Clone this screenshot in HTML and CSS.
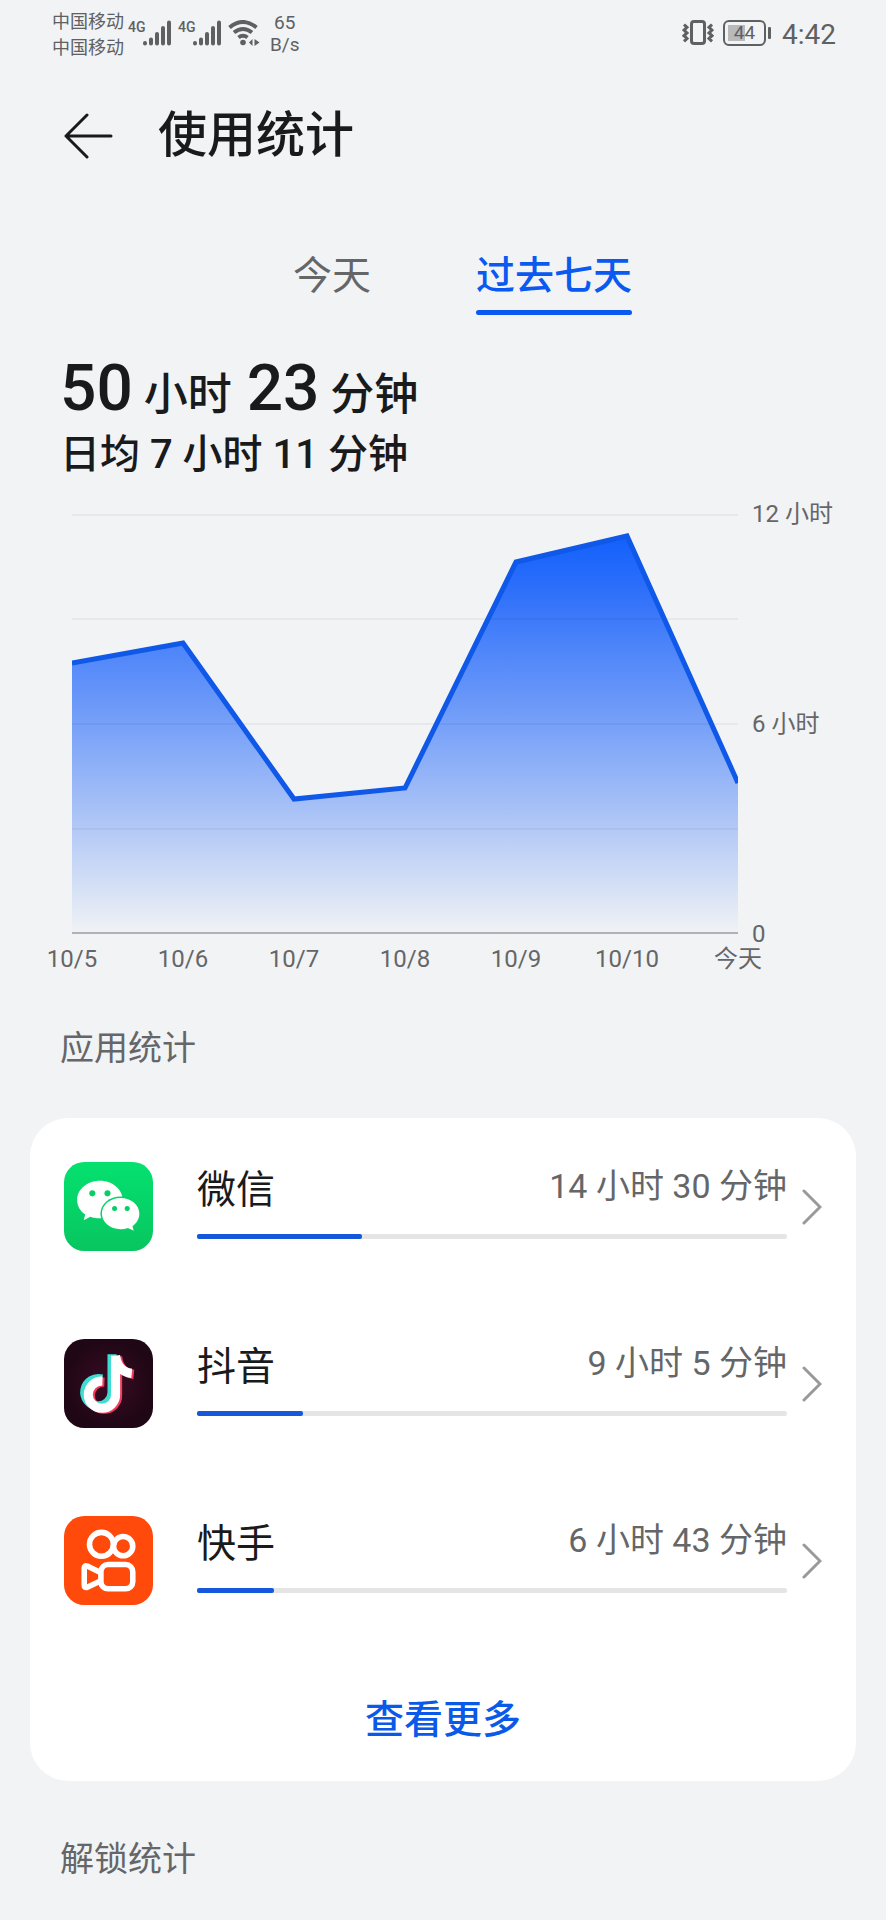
FILE: index.html
```html
<!DOCTYPE html>
<html lang="zh-CN">
<head>
<meta charset="utf-8">
<meta name="viewport" content="width=device-width, initial-scale=1">
<title>使用统计</title>
<link rel="stylesheet" href="styles.css">
</head>
<body>
<div class="status-bar">
  <div class="status-left">
    <div class="carriers"><span>中国移动</span><span>中国移动</span></div>
    <div class="signal">
      <span class="network">4G</span>
      <svg class="bars" viewBox="0 0 28 26" aria-hidden="true"><path d="M2 23v.5M8 19.500v4M14 14v9.500M20 8v15.500M26 2.500v21"/></svg>
    </div>
    <div class="signal">
      <span class="network">4G</span>
      <svg class="bars" viewBox="0 0 28 26" aria-hidden="true"><path d="M2 23v.5M8 19.500v4M14 14v9.500M20 8v15.500M26 2.500v21"/></svg>
    </div>
    <svg class="wifi" viewBox="0 0 32 26" aria-hidden="true">
      <path class="wifi-arc" d="M1.500 7.500Q15 -3.500 28.500 7.500M6 12.500q9-7 18 0M10.500 17.500q4.500-3.500 9 0"/>
      <circle cx="15" cy="22.500" r="2.800"/>
      <path d="M24.500 19v7L21 22.500zM26.500 19v7l5-3.500z"/>
    </svg>
    <div class="speed"><span>65</span><span>B/s</span></div>
  </div>
  <div class="status-right">
    <svg class="vibrate" viewBox="0 0 32 28" aria-hidden="true">
      <rect x="9.500" y="2.500" width="13" height="22" rx="2.500"/>
      <path d="M2 5.500l3 2.800-3 2.800 3 2.800-3 2.800 3 2.800-3 2.800M30 5.500l-3 2.800 3 2.800-3 2.800 3 2.800-3 2.800 3 2.800"/>
    </svg>
    <div class="battery"><span class="battery-level">44</span></div>
    <span class="clock">4:42</span>
  </div>
</div>

<header class="header">
  <button class="back" type="button" aria-label="返回">
    <svg viewBox="0 0 50 46" aria-hidden="true"><path d="M23 2L2 23l21 21M3 23h44"/></svg>
  </button>
  <h1 class="title">使用统计</h1>
</header>

<nav class="tabs">
  <button class="tab" type="button">今天</button>
  <button class="tab tab-active" type="button" aria-current="true">过去七天</button>
</nav>

<main>
  <section class="summary">
    <p class="total"><span class="number">50</span> 小时 <span class="number">23</span> 分钟</p>
    <p class="average">日均 7 小时 11 分钟</p>
  </section>

  <section class="chart">
    <svg class="plot" viewBox="0 0 666 420" preserveAspectRatio="none" role="img" aria-label="过去七天使用时长">
      <defs>
        <linearGradient id="fill" gradientUnits="userSpaceOnUse" x1="0" y1="21" x2="0" y2="420">
          <stop offset="0" stop-color="#1260fb"/>
          <stop offset=".12" stop-color="#2a6dfb"/>
          <stop offset=".5" stop-color="#7ca4f8"/>
          <stop offset=".75" stop-color="#b6cbf6"/>
          <stop offset="1" stop-color="#f1f3f5"/>
        </linearGradient>
      </defs>
      <path fill="url(#fill)" d="M0 149L111 129L222 285L333 274L444 48L555 22L666 269V420H0z"/>
      <path class="grid-line" d="M0 1H666M0 105H666M0 210H666M0 315H666"/>
      <path class="base-line" d="M0 419H666"/>
      <path class="trend" d="M0 149L111 129L222 285L333 274L444 48L555 22L666 269"/>
    </svg>
    <div class="y-axis"><span>12 小时</span><span>6 小时</span><span>0</span></div>
    <div class="x-axis"><span>10/5</span><span>10/6</span><span>10/7</span><span>10/8</span><span>10/9</span><span>10/10</span><span>今天</span></div>
  </section>

  <h2 class="section-title">应用统计</h2>
  <section class="card">
    <a class="app" href="#wechat">
      <svg class="app-icon" viewBox="0 0 88 88" aria-hidden="true">
        <defs><linearGradient id="wechat-bg" x1="0" y1="0" x2="0" y2="1"><stop offset="0" stop-color="#04e16f"/><stop offset="1" stop-color="#08c560"/></linearGradient></defs>
        <rect width="88" height="88" rx="20" fill="url(#wechat-bg)"/>
        <path fill="#fff" d="M35.500 18.500C23 18.500 13 27 13 37.500c0 6 3 11 8 14.500l-1.500 5.500 6.500-3.300c3 1 6 1.500 9.500 1.500C48 55.700 58 48 58 37.500S48 18.500 35.500 18.500z"/>
        <ellipse cx="56" cy="51" rx="20" ry="17" fill="#07d267"/>
        <path fill="#fff" d="M56 35.500c-10.500 0-18.500 7-18.500 15.500S45.500 66.500 56 66.500c2.500 0 5-.4 7.200-1.200L69 68l-1.300-4.500C72 60.500 74.500 56 74.500 51c0-8.500-8-15.500-18.500-15.500z"/>
        <g fill="#07cf66"><circle cx="28" cy="31" r="3"/><circle cx="43" cy="31" r="3"/><circle cx="50" cy="46" r="2.500"/><circle cx="62.500" cy="46" r="2.500"/></g>
      </svg>
      <div class="app-body">
        <div class="app-line"><span class="app-name">微信</span><span class="app-time">14 小时 30 分钟</span></div>
        <div class="track"><div class="track-fill" style="width:28%"></div></div>
      </div>
      <svg class="chevron" viewBox="0 0 20 36" aria-hidden="true"><path d="M2 2l16 16L2 34"/></svg>
    </a>
    <a class="app" href="#douyin">
      <svg class="app-icon" viewBox="0 0 88 88" aria-hidden="true">
        <defs><radialGradient id="douyin-bg"><stop offset="0" stop-color="#3b0b24"/><stop offset="1" stop-color="#1f0715"/></radialGradient></defs>
        <rect width="88" height="88" rx="20" fill="url(#douyin-bg)"/>
        <g fill="none" stroke-width="9">
          <path stroke="#f23c5f" d="M53 17.500V55.500A13.500 13.500 0 1 1 40 42.500M53 17.500q2 16 16 17.500"/>
          <path stroke="#3fdcd4" d="M47.500 15v38A13.500 13.500 0 1 1 37.500 39.500"/>
          <path stroke="#fff" d="M51 16.500V54.500A13.500 13.500 0 1 1 38 41.500M51 16.500q2 16 16 17.500"/>
        </g>
      </svg>
      <div class="app-body">
        <div class="app-line"><span class="app-name">抖音</span><span class="app-time">9 小时 5 分钟</span></div>
        <div class="track"><div class="track-fill" style="width:18%"></div></div>
      </div>
      <svg class="chevron" viewBox="0 0 20 36" aria-hidden="true"><path d="M2 2l16 16L2 34"/></svg>
    </a>
    <a class="app" href="#kuaishou">
      <svg class="app-icon" viewBox="0 0 88 88" aria-hidden="true">
        <rect width="88" height="88" rx="20" fill="#ff4a0b"/>
        <g fill="none" stroke="#fff" stroke-width="5.500" stroke-linejoin="round">
          <circle cx="37" cy="28" r="11.800"/>
          <circle cx="58.500" cy="29.800" r="9.500"/>
          <rect x="36.500" y="48" width="31.500" height="24" rx="7"/>
          <path d="M36.500 56L23 49.500q-3-1-3 2v17q0 3 3 2L36.500 64"/>
        </g>
      </svg>
      <div class="app-body">
        <div class="app-line"><span class="app-name">快手</span><span class="app-time">6 小时 43 分钟</span></div>
        <div class="track"><div class="track-fill" style="width:13%"></div></div>
      </div>
      <svg class="chevron" viewBox="0 0 20 36" aria-hidden="true"><path d="M2 2l16 16L2 34"/></svg>
    </a>
    <button class="more" type="button">查看更多</button>
  </section>

  <h2 class="section-title">解锁统计</h2>
</main>
</body>
</html>
```
FILE: styles.css
```css
* {
  box-sizing: border-box;
}

body {
  margin: 0;
  background: #f1f3f5;
  color: #191a1c;
  font-family: Roboto, "Noto Sans CJK SC", sans-serif;
}

h1, h2, p {
  margin: 0;
}

button {
  padding: 0;
  border: 0;
  background: none;
  font-family: inherit;
  cursor: pointer;
}

svg {
  display: block;
  flex: none;
}

/* Status bar */
.status-bar {
  display: flex;
  justify-content: space-between;
  height: 68px;
  padding: 9px 50px 0 52px;
  color: #5f6062;
}

.status-left,
.status-right {
  display: flex;
  align-items: flex-start;
}

.carriers {
  display: flex;
  flex-direction: column;
  font-size: 18px;
  line-height: 26px;
}

.signal {
  display: flex;
  align-items: flex-start;
  width: 46px;
  margin: 11px 0 0 4px;
}

.network {
  width: 15px;
  font-size: 14px;
  font-weight: 500;
  line-height: 14px;
}

.bars {
  width: 28px;
  height: 26px;
  fill: none;
  stroke: #5f6062;
  stroke-width: 4;
  stroke-linecap: round;
}

.wifi {
  width: 32px;
  height: 26px;
  margin: 11px 0 0 4px;
  fill: #5f6062;
}

.wifi-arc {
  fill: none;
  stroke: #5f6062;
  stroke-width: 4;
}

.speed {
  display: flex;
  flex-direction: column;
  margin: 3px 0 0 10px;
  font-size: 19px;
  line-height: 22px;
  text-align: center;
}

.vibrate {
  width: 32px;
  height: 28px;
  margin: 10px 9px 0 0;
  fill: none;
  stroke: #5f6062;
  stroke-width: 3;
}

.battery {
  position: relative;
  width: 43px;
  height: 26px;
  margin: 11px 16px 0 0;
  padding: 3px;
  border: 2px solid #5f6062;
  border-radius: 6px;
}

.battery::after {
  content: "";
  position: absolute;
  top: 5px;
  right: -7px;
  width: 3px;
  height: 12px;
  border-radius: 1px;
  background: #5f6062;
}

.battery-level {
  display: block;
  background: linear-gradient(to right, #b8b9bb 50%, transparent 50%);
  font-size: 19px;
  line-height: 16px;
  text-align: center;
}

.clock {
  margin-top: 10px;
  font-size: 28px;
  line-height: 32px;
}

/* Title row */
.header {
  display: flex;
  align-items: center;
  gap: 44px;
  height: 136px;
  padding: 0 64px;
}

.back svg {
  width: 50px;
  height: 46px;
  fill: none;
  stroke: #191a1c;
  stroke-width: 3;
  stroke-linecap: round;
  stroke-linejoin: round;
}

.title {
  font-size: 49px;
  font-weight: 500;
  line-height: 64px;
}

/* Tabs */
.tabs {
  display: grid;
  grid-template-columns: 222px 222px;
  justify-content: center;
  justify-items: center;
  margin-top: 40px;
}

.tab {
  padding-bottom: 7px;
  color: #656668;
  font-size: 39px;
  line-height: 64px;
}

.tab-active {
  position: relative;
  color: #0a59f0;
  font-weight: 500;
}

.tab-active::after {
  content: "";
  position: absolute;
  right: 0;
  bottom: 0;
  left: 0;
  height: 5px;
  border-radius: 3px;
  background: #0a59f0;
}

/* Totals */
.summary {
  padding: 38px 60px 0;
  font-weight: 500;
}

.total {
  font-size: 44px;
  line-height: 72px;
}

.number {
  font-size: 64px;
}

.number + .number {
  margin-left: 4px;
}

.average {
  font-size: 40px;
  line-height: 48px;
}

/* Chart */
.chart {
  display: grid;
  grid-template-columns: 1fr 82px;
  column-gap: 14px;
  padding: 35px 52px 0 72px;
  color: #656668;
  font-size: 24px;
  line-height: 24px;
}

.plot {
  width: 100%;
  height: 420px;
}

.grid-line,
.base-line,
.trend {
  fill: none;
  vector-effect: non-scaling-stroke;
}

.grid-line {
  stroke: rgba(0, 0, 0, .09);
  stroke-width: 1;
}

.base-line {
  stroke: #b0b2b6;
  stroke-width: 2;
}

.trend {
  stroke: #0f58e8;
  stroke-width: 5;
}

.y-axis {
  display: flex;
  flex-direction: column;
  justify-content: space-between;
  margin: -12px 0;
  white-space: nowrap;
}

.x-axis {
  display: flex;
  justify-content: space-between;
  margin-top: 13px;
}

.x-axis span {
  display: flex;
  justify-content: center;
  width: 0;
  white-space: nowrap;
}

/* App list */
.section-title {
  padding: 0 60px;
  color: #656668;
  font-size: 34px;
  font-weight: 400;
  line-height: 48px;
}

.chart + .section-title {
  margin-top: 53px;
}

.card {
  margin: 46px 30px 54px;
  padding: 44px 0 20px;
  border-radius: 38px;
  background: #fff;
}

.app {
  display: flex;
  align-items: center;
  height: 89px;
  margin-bottom: 88px;
  padding: 0 34px;
  color: inherit;
  text-decoration: none;
}

.app-icon {
  width: 89px;
  height: 89px;
}

.app-body {
  flex: 1;
  margin: 0 15px 0 44px;
  padding-bottom: 12px;
}

.app-line {
  display: flex;
  align-items: flex-start;
  justify-content: space-between;
}

.app-name {
  font-size: 39px;
  line-height: 56px;
}

.app-time {
  color: #656668;
  font-size: 34px;
  line-height: 48px;
}

.track {
  height: 5px;
  margin-top: 16px;
  border-radius: 2px;
  background: #e5e5e5;
}

.track-fill {
  height: 100%;
  border-radius: 2px;
  background: #1558dc;
}

.chevron {
  width: 20px;
  height: 36px;
  fill: none;
  stroke: #98999b;
  stroke-width: 3;
  stroke-linecap: round;
}

.more {
  display: block;
  width: 100%;
  height: 68px;
  padding-bottom: 14px;
  color: #0a59e8;
  font-size: 39px;
  font-weight: 500;
  line-height: 54px;
}
```
